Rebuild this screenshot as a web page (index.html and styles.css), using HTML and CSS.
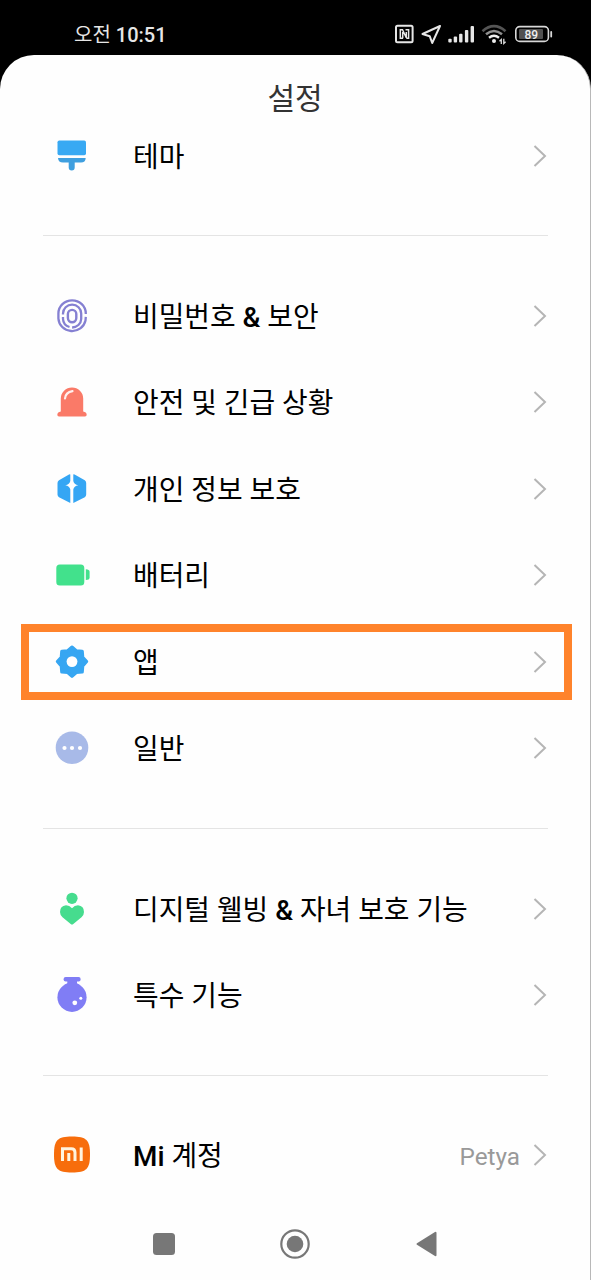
FILE: index.html
```html
<!DOCTYPE html>
<html lang="ko">
<head>
<meta charset="utf-8">
<title>설정</title>
<link rel="stylesheet" href="styles.css">
</head>
<body>
<header class="status">
  <div class="clock">오전 <span class="time">10:51</span></div>
  <svg class="status-icons" width="164" height="28" viewBox="392 20 164 28" fill="none">
    <rect x="396" y="25.8" width="16.6" height="16.4" rx="1.5" stroke="#e6e6e6" stroke-width="2"/>
    <path d="M403 38.2H400.300V29.800H402.500L406.300 37.800V32M402.700 32V38.200M405.500 29.800H408.600V38.200H406.300" stroke="#e6e6e6" stroke-width="1.5"/>
    <path d="M440 26L422.5 34L429.7 36.2L432.2 43Z" stroke="#e6e6e6" stroke-width="2" stroke-linejoin="round"/>
    <g fill="#e6e6e6">
      <rect x="448.3" y="38.7" width="3.4" height="3.8" rx="1"/>
      <rect x="453.7" y="36.5" width="3.4" height="6" rx="1"/>
      <rect x="459.1" y="33.7" width="3.4" height="8.8" rx="1"/>
      <rect x="464.9" y="30" width="3.4" height="12.5" rx="1"/>
      <rect x="470.6" y="26" width="3.4" height="16.5" rx="1"/>
    </g>
    <path d="M482.5 31.2Q494 21.2 505.5 31.2" stroke="#555" stroke-width="2.7"/>
    <path d="M486 34.3Q494 27.6 502 34.3" stroke="#909090" stroke-width="2.5"/>
    <path d="M489 37.7Q494 33.8 499 37.7" stroke="#eee" stroke-width="2.4"/>
    <circle cx="494" cy="41" r="2" fill="#eee"/>
    <path d="M501.3 44V39.5L499.5 41.2M503.8 38.8V43.4L505.6 41.7" stroke="#ddd" stroke-width="1.3"/>
    <rect x="515.8" y="26.6" width="32.6" height="14.8" rx="4" stroke="#d8d8d8" stroke-width="1.6"/>
    <rect x="519" y="29" width="24" height="10" rx="1" fill="#505050"/>
    <path d="M551.2 32V36.5" stroke="#d8d8d8" stroke-width="1.8" stroke-linecap="round"/>
    <text class="charge" x="531.3" y="38.500" text-anchor="middle">89</text>
  </svg>
</header>
<main class="sheet">
  <h1 class="title">설정</h1>
  <section class="group">
    <div class="row">
      <svg class="icon" viewBox="0 0 40 40" fill="#38a9f3"><rect x="5.5" y="4.5" width="28.5" height="14.7" rx="1.8"/><path d="M6 22H33.7Q33.5 26.6 29 26.6H22.7V31.5A3 3 0 0 1 16.7 31.5V26.6H11Q6.3 26.6 6 22Z" fill="#3f9fdf"/></svg>
      <span class="label">테마</span>
      <svg class="arrow" viewBox="0 0 14 24"><path d="M1.5 2L12 12L1.5 22"/></svg>
    </div>
  </section>
  <section class="group">
    <div class="row">
      <svg class="icon" viewBox="0 0 40 40" fill="none" stroke="#8580d2" stroke-width="2.3"><path d="M33.800 18V17.500A13.700 13.200 0 0 0 6.400 17.500V22.500A13.700 13.200 0 0 0 33.500 24.500L33.800 20.800"/><path d="M11 18.500V17.500A9.100 8.800 0 0 1 29.200 17.500V23A9.100 8.800 0 0 1 20.100 31.500M11 21V23A9.100 8.800 0 0 0 17.500 31"/><rect x="15.900" y="13.900" width="8.400" height="12.400" rx="4.200" stroke-width="2.400"/></svg>
      <span class="label">비밀번호 <b>&amp;</b> 보안</span>
      <svg class="arrow" viewBox="0 0 14 24"><path d="M1.5 2L12 12L1.5 22"/></svg>
    </div>
    <div class="row">
      <svg class="icon" viewBox="0 0 40 40"><path d="M8.8 29.5V16.5A11.2 11 0 0 1 31.2 16.5V29.5Q34.5 30 34.7 32.8Q34.7 34.5 33 34.5H7Q5.3 34.5 5.3 32.8Q5.5 30 8.8 29.5Z" fill="#fa7a68"/><path d="M13 16.5Q13.5 10.5 20.5 9.2" fill="none" stroke="#fff0ed" stroke-width="2.2" stroke-linecap="round"/></svg>
      <span class="label">안전 및 긴급 상황</span>
      <svg class="arrow" viewBox="0 0 14 24"><path d="M1.5 2L12 12L1.5 22"/></svg>
    </div>
    <div class="row">
      <svg class="icon" viewBox="0 0 40 40"><path d="M18.3 5.6V12Q17.7 15.4 13.3 16.2Q17.7 17 18.3 20.5V34L7 28.2Q5.5 27.3 5.5 25.5V14Q5.5 12.2 7 11.3L17 5.5Q18.3 4.8 18.3 5.6ZM21.3 5.6V12Q21.9 15.4 26.3 16.2Q21.9 17 21.3 20.5V34L32.8 28.2Q34.2 27.3 34.2 25.5V14Q34.2 12.2 32.8 11.3L22.6 5.5Q21.3 4.8 21.3 5.6Z" fill="#35a6f4"/></svg>
      <span class="label">개인 정보 보호</span>
      <svg class="arrow" viewBox="0 0 14 24"><path d="M1.5 2L12 12L1.5 22"/></svg>
    </div>
    <div class="row">
      <svg class="icon" viewBox="0 0 40 40" fill="#42e18c"><rect x="4.3" y="9.4" width="28" height="21" rx="3.5"/><path d="M33.8 14.2Q37.6 14.2 37.6 17V22.5Q37.6 25 33.8 25Z"/></svg>
      <span class="label">배터리</span>
      <svg class="arrow" viewBox="0 0 14 24"><path d="M1.5 2L12 12L1.5 22"/></svg>
    </div>
    <div class="row highlighted">
      <svg class="icon" viewBox="0 0 40 40"><path d="M20 5L24.300 8.700L30.300 9.200L30.800 15.200L34.700 19.600L30.800 24.100L30.300 30.100L24.300 30.600L20 34.500L15.700 30.600L9.700 30.100L9.200 24.100L5.300 19.600L9.200 15.200L9.700 9.200L15.700 8.700Z" fill="#36a6f2" stroke="#36a6f2" stroke-width="3" stroke-linejoin="round"/><circle cx="20" cy="19.6" r="5.4" fill="#fefefe"/></svg>
      <span class="label">앱</span>
      <svg class="arrow" viewBox="0 0 14 24"><path d="M1.5 2L12 12L1.5 22"/></svg>
    </div>
    <div class="row">
      <svg class="icon" viewBox="0 0 40 40"><circle cx="20" cy="19.7" r="16.3" fill="#a8bae8"/><g fill="#fff"><circle cx="12.5" cy="20" r="2.1"/><circle cx="20" cy="20" r="2.1"/><circle cx="28" cy="20" r="2.1"/></g></svg>
      <span class="label">일반</span>
      <svg class="arrow" viewBox="0 0 14 24"><path d="M1.5 2L12 12L1.5 22"/></svg>
    </div>
  </section>
  <section class="group">
    <div class="row">
      <svg class="icon" viewBox="0 0 40 40" fill="#46dc8e"><circle cx="20" cy="9.3" r="5.6"/><path d="M20 19.3Q22.5 16.3 26 16.3Q32 17 32 23Q32 26 29.5 28.3L21.3 35Q20 36 18.7 35L10.5 28.3Q8 26 8 23Q8 17 14 16.3Q17.5 16.3 20 19.3Z"/></svg>
      <span class="label">디지털 웰빙 <b>&amp;</b> 자녀 보호 기능</span>
      <svg class="arrow" viewBox="0 0 14 24"><path d="M1.5 2L12 12L1.5 22"/></svg>
    </div>
    <div class="row">
      <svg class="icon" viewBox="0 0 40 40" fill="#807df5"><rect x="11.6" y="2" width="17" height="4.4" rx="2"/><path d="M15.3 5H25V8.5L28 10H12L15.3 8.5Z"/><circle cx="20" cy="22.3" r="14.6"/><circle cx="22.8" cy="27.8" r="2.4" fill="#fff"/><circle cx="28.8" cy="23.3" r="1.5" fill="#fff"/></svg>
      <span class="label">특수 기능</span>
      <svg class="arrow" viewBox="0 0 14 24"><path d="M1.5 2L12 12L1.5 22"/></svg>
    </div>
  </section>
  <section class="group">
    <div class="row">
      <svg class="icon" viewBox="0 0 40 40"><path d="M20 1.5C34.5 1.5 38 5 38 19.5S34.5 37.5 20 37.5S2 34 2 19.5S5.5 1.5 20 1.5Z" fill="#f76d0c"/><path d="M10.500 26V13.700H19.200Q23 13.700 23 17.500V26M16.800 18V26M29.200 12.400V26" fill="none" stroke="#fff4df" stroke-width="3"/></svg>
      <span class="label"><b>Mi</b> 계정</span>
      <span class="value">Petya</span>
      <svg class="arrow" viewBox="0 0 14 24"><path d="M1.5 2L12 12L1.5 22"/></svg>
    </div>
  </section>
  <nav class="navbar">
    <svg width="32" height="32" viewBox="0 0 32 32" fill="#777"><rect x="5" y="5" width="22" height="22" rx="3.5"/></svg>
    <svg width="32" height="32" viewBox="0 0 32 32"><circle cx="16" cy="16" r="13.7" fill="none" stroke="#777" stroke-width="2.2"/><circle cx="16" cy="16" r="8.3" fill="#777"/></svg>
    <svg width="32" height="32" viewBox="0 0 32 32"><path d="M7.500 16L25.500 4.8V27.2Z" fill="#777" stroke="#777" stroke-width="2" stroke-linejoin="round"/></svg>
  </nav>
</main>
</body>
</html>
```

FILE: styles.css
```css
* {
  box-sizing: border-box;
}

body {
  margin: 0;
  width: 591px;
  height: 1280px;
  overflow: hidden;
  background: #000;
  font-family: Roboto, "Noto Sans CJK KR", sans-serif;
  display: flex;
  flex-direction: column;
}

svg {
  display: block;
  flex: none;
}

.status {
  height: 55px;
  flex: none;
  padding: 13px 35px 0 74px;
  display: flex;
  justify-content: space-between;
  align-items: center;
  color: #e6e6e6;
}

.clock {
  padding-top: 1px;
  font-size: 20px;
  line-height: 28px;
  white-space: nowrap;
}

.time {
  font-weight: 500;
}

.charge {
  fill: #eee;
  font-size: 12px;
  font-weight: 500;
}

.sheet {
  flex: 1;
  background: #fefefe;
  border-right: 1px solid #b8b8b8;
  border-radius: 34px 34px 0 0;
  display: flex;
  flex-direction: column;
}

.title {
  margin: 0;
  height: 58px;
  padding-top: 24px;
  font-size: 30px;
  line-height: 40px;
  font-weight: 400;
  text-align: center;
  color: #333;
}

.group + .group {
  margin-top: 36px;
  padding-top: 37.5px;
  background: linear-gradient(#e4e4e4, #e4e4e4) 43px 0 / 505px 1px no-repeat;
}

.group:nth-of-type(2) {
  margin-top: 35.5px;
}

.group:nth-of-type(3) {
  margin-top: 36.5px;
}

.row {
  height: 86.5px;
  padding: 0 43px 0 52px;
  display: flex;
  align-items: center;
}

.highlighted {
  height: 76px;
  margin: 5px 18px 5.5px 21px;
  padding: 0 17px 0 23px;
  border: 8px solid #ff832b;
}

.icon {
  width: 40px;
  height: 40px;
}

.label {
  flex: 1;
  margin-left: 41px;
  padding-top: 4px;
  font-size: 27.9px;
  line-height: 40px;
  white-space: nowrap;
  color: #000;
}

.label b {
  font-weight: 500;
}

.value {
  margin-right: 13px;
  padding-top: 3px;
  font-size: 24.3px;
  line-height: 40px;
  color: #999;
}

.arrow {
  width: 14px;
  height: 24px;
  fill: none;
  stroke: #b5b5b5;
  stroke-width: 2;
}

.navbar {
  margin-top: auto;
  height: 72px;
  padding: 20px 148px 20px 148px;
  display: flex;
  justify-content: space-between;
}
```
